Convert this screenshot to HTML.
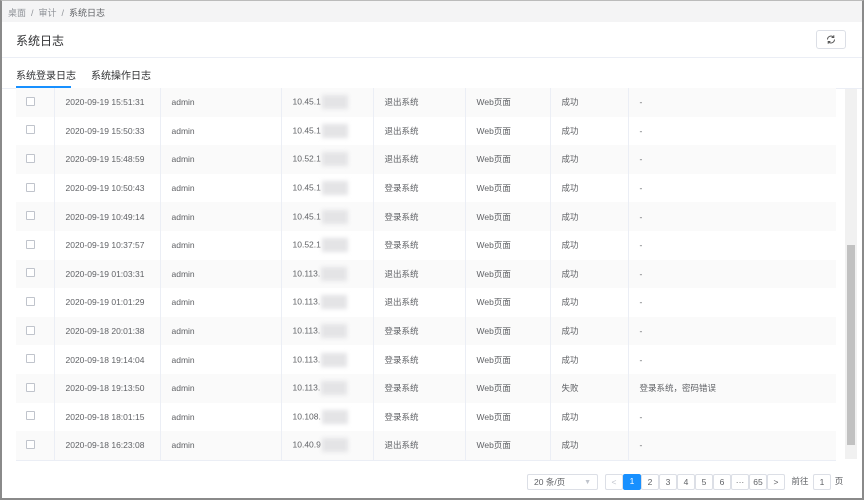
<!DOCTYPE html><html><head><meta charset="utf-8"><style>
*{box-sizing:border-box;margin:0;padding:0}
body{width:864px;height:500px;overflow:hidden;font-family:"Liberation Sans","Noto Sans CJK SC",sans-serif;background:#fff;position:relative;color:#606266}
.frame{position:absolute;left:0;top:0;width:864px;height:500px;border:2px solid #8a8a8a;border-top:1px solid #bbb}
.bc{position:absolute;left:2px;top:1px;width:860px;height:21px;background:#f4f4f5;font-size:9px;color:#909399;padding:5px 6px}
.bc b{font-weight:normal;color:#606266}
.title{position:absolute;left:16px;top:32px;font-size:12px;color:#303133}
.hr{position:absolute;left:2px;width:860px;height:1px;background:#ebeef5}
.btn{position:absolute;left:816px;top:30px;width:30px;height:19px;border:1px solid #dcdfe6;border-radius:3px}
.tab{position:absolute;top:67px;font-size:10px;color:#303133}
.ul{position:absolute;left:16px;top:86px;width:55px;height:2px;background:#1890ff;z-index:5}
table{position:absolute;left:16px;top:88px;width:820px;border-collapse:collapse;font-size:8.5px}
td{height:28.6px;border-right:1px solid #ebeef5;padding-left:11px;white-space:nowrap}
tr:nth-child(odd) td{background:#fafafa}
td:last-child{border-right:none}
.cb{display:inline-block;width:9px;height:9px;border:1px solid #c0c4cc;background:#fff;border-radius:1px;margin-left:-1px}
.blur{display:inline-block;width:26px;height:14px;background:#e4e4e6;vertical-align:middle;filter:blur(2px);margin-left:1px}
.sb{position:absolute;left:845px;top:89px;width:12px;height:370px;background:#f1f1f1}
.th{position:absolute;left:847px;top:245px;width:8px;height:200px;background:#c1c1c1}
.pg{position:absolute;top:474px;height:16px;font-size:8.5px;line-height:15px;text-align:center;color:#606266}
.pb{border:1px solid #dcdfe6;border-radius:2px;width:18px}
</style></head><body>
<div class="bc">桌面 &nbsp;/&nbsp; 审计 &nbsp;/&nbsp; <b>系统日志</b></div>
<div class="title">系统日志</div>
<div class="btn"><svg width="28" height="17" viewBox="0 0 28 17"><path d="M10.5 8.5a3.5 3.5 0 0 1 6-2.4M17.5 8.5a3.5 3.5 0 0 1-6 2.4" fill="none" stroke="#555" stroke-width="1"/><path d="M16.8 4.3v2.2h-2.2M11.2 12.7v-2.2h2.2" fill="none" stroke="#555" stroke-width="1"/></svg></div>
<div class="hr" style="top:57px"></div>
<div class="tab" style="left:16px">系统登录日志</div>
<div class="tab" style="left:91px">系统操作日志</div>
<div class="hr" style="top:88px"></div>
<div class="ul"></div>
<table>
<colgroup><col style="width:38px"><col style="width:106px"><col style="width:121px"><col style="width:92px"><col style="width:92px"><col style="width:85px"><col style="width:78px"><col></colgroup>
<tr><td><span class="cb"></span></td><td>2020-09-19 15:51:31</td><td>admin</td><td>10.45.1<span class="blur"></span></td><td>退出系统</td><td>Web页面</td><td>成功</td><td>-</td></tr>
<tr><td><span class="cb"></span></td><td>2020-09-19 15:50:33</td><td>admin</td><td>10.45.1<span class="blur"></span></td><td>退出系统</td><td>Web页面</td><td>成功</td><td>-</td></tr>
<tr><td><span class="cb"></span></td><td>2020-09-19 15:48:59</td><td>admin</td><td>10.52.1<span class="blur"></span></td><td>退出系统</td><td>Web页面</td><td>成功</td><td>-</td></tr>
<tr><td><span class="cb"></span></td><td>2020-09-19 10:50:43</td><td>admin</td><td>10.45.1<span class="blur"></span></td><td>登录系统</td><td>Web页面</td><td>成功</td><td>-</td></tr>
<tr><td><span class="cb"></span></td><td>2020-09-19 10:49:14</td><td>admin</td><td>10.45.1<span class="blur"></span></td><td>登录系统</td><td>Web页面</td><td>成功</td><td>-</td></tr>
<tr><td><span class="cb"></span></td><td>2020-09-19 10:37:57</td><td>admin</td><td>10.52.1<span class="blur"></span></td><td>登录系统</td><td>Web页面</td><td>成功</td><td>-</td></tr>
<tr><td><span class="cb"></span></td><td>2020-09-19 01:03:31</td><td>admin</td><td>10.113.<span class="blur"></span></td><td>退出系统</td><td>Web页面</td><td>成功</td><td>-</td></tr>
<tr><td><span class="cb"></span></td><td>2020-09-19 01:01:29</td><td>admin</td><td>10.113.<span class="blur"></span></td><td>退出系统</td><td>Web页面</td><td>成功</td><td>-</td></tr>
<tr><td><span class="cb"></span></td><td>2020-09-18 20:01:38</td><td>admin</td><td>10.113.<span class="blur"></span></td><td>登录系统</td><td>Web页面</td><td>成功</td><td>-</td></tr>
<tr><td><span class="cb"></span></td><td>2020-09-18 19:14:04</td><td>admin</td><td>10.113.<span class="blur"></span></td><td>登录系统</td><td>Web页面</td><td>成功</td><td>-</td></tr>
<tr><td><span class="cb"></span></td><td>2020-09-18 19:13:50</td><td>admin</td><td>10.113.<span class="blur"></span></td><td>登录系统</td><td>Web页面</td><td>失败</td><td>登录系统，密码错误</td></tr>
<tr><td><span class="cb"></span></td><td>2020-09-18 18:01:15</td><td>admin</td><td>10.108.<span class="blur"></span></td><td>登录系统</td><td>Web页面</td><td>成功</td><td>-</td></tr>
<tr><td><span class="cb"></span></td><td>2020-09-18 16:23:08</td><td>admin</td><td>10.40.9<span class="blur"></span></td><td>退出系统</td><td>Web页面</td><td>成功</td><td>-</td></tr>
</table>
<div class="hr" style="top:460px;left:16px;width:820px"></div>
<div class="sb"></div><div class="th"></div>
<div class="pg pb" style="left:527px;width:71px;text-align:left;padding-left:6px">20 条/页<span style="position:absolute;right:6px;color:#c0c4cc;font-size:7px">▼</span></div>
<div class="pg pb" style="left:605px;color:#c0c4cc">&lt;</div>
<div class="pg" style="left:623px;width:18px;background:#1890ff;color:#fff;border-radius:2px">1</div>
<div class="pg pb" style="left:641px">2</div>
<div class="pg pb" style="left:659px">3</div>
<div class="pg pb" style="left:677px">4</div>
<div class="pg pb" style="left:695px">5</div>
<div class="pg pb" style="left:713px">6</div>
<div class="pg pb" style="left:731px">···</div>
<div class="pg pb" style="left:749px">65</div>
<div class="pg pb" style="left:767px">&gt;</div>
<div class="pg" style="left:790px;width:20px">前往</div>
<div class="pg pb" style="left:813px">1</div>
<div class="pg" style="left:832px;width:14px">页</div>
<div class="frame"></div>
</body></html>
